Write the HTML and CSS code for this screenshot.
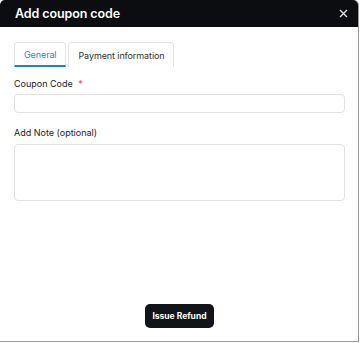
FILE: index.html
```html
<!DOCTYPE html>
<html>
<head>
<meta charset="utf-8">
<link rel="stylesheet" href="styles.css">
</head>
<body>
<div class="modal">
  <div class="modal-header">
    <span class="modal-title">Add coupon code</span>
    <svg class="close" width="9" height="9" viewBox="0 0 9 9"><path d="M1 1L8 8M8 1L1 8" stroke="#e6e6e6" stroke-width="1.3" fill="none"/></svg>
  </div>
  <div class="modal-body">
    <div class="tabs">
      <div class="tab active">General</div>
      <div class="tab">Payment information</div>
    </div>
    <div class="field">
      <label class="label">Coupon Code <span class="req">*</span></label>
      <div class="input"></div>
    </div>
    <div class="field note">
      <label class="label">Add Note (optional)</label>
      <div class="textarea"></div>
    </div>
  </div>
  <div class="modal-footer">
    <button class="btn">Issue Refund</button>
  </div>
</div>
</body>
</html>
```
FILE: styles.css
```css
html, body { margin: 0; padding: 0; background: #ffffff; }
body { font-family: "Inter", "Noto Sans", sans-serif; }
.modal {
  width: 358px;
  height: 341px;
  border-right: 1px solid #9a9a9a;
  border-bottom: 1px solid #9a9a9a;
  display: flex;
  flex-direction: column;
  background: #fff;
  border-radius: 5px 5px 0 0;
}
.modal-header {
  height: 27px;
  background: #0b0d10;
  border-radius: 5px 5px 0 0;
  display: flex;
  align-items: center;
  justify-content: space-between;
  padding: 0 10px 0 15px;
}
.modal-title { color: #fff; font-size: 12.5px; font-weight: 600; letter-spacing: -0.1px; }
.close { display: block; }
.modal-body { padding: 15px 13px 0 14px; flex: 1; }
.tabs { display: flex; gap: 2px; }
.tab {
  height: 25px;
  padding: 0 9px;
  border: 1px solid #e4e4e4;
  border-bottom: none;
  border-radius: 4px 4px 0 0;
  font-size: 9px;
  color: #333;
  display: flex;
  align-items: center;
  box-sizing: border-box;
  letter-spacing: -0.1px;
}
.tab.active { color: #2f86d6; border-bottom: 2px solid #1f7fd8; }
.field { margin-top: 11px; }
.label { display: block; font-size: 9px; color: #222; line-height: 12px; }
.req { color: #e53935; margin-left: 3px; }
.input {
  margin-top: 4px;
  height: 19px;
  box-sizing: border-box;
  border: 1px solid #e2e2e2;
  border-radius: 4px;
}
.note { margin-top: 14px; }
.textarea {
  margin-top: 5px;
  height: 57px;
  box-sizing: border-box;
  border: 1px solid #e2e2e2;
  border-radius: 4px;
}
.modal-footer { display: flex; justify-content: center; padding-bottom: 13px; }
.btn {
  background: #111418;
  color: #fff;
  border: none;
  border-radius: 5px;
  height: 24px;
  width: 69px;
  font-family: inherit;
  font-size: 8.5px;
  font-weight: 700;
  padding: 0;
  margin-left: 1px;
}
```
